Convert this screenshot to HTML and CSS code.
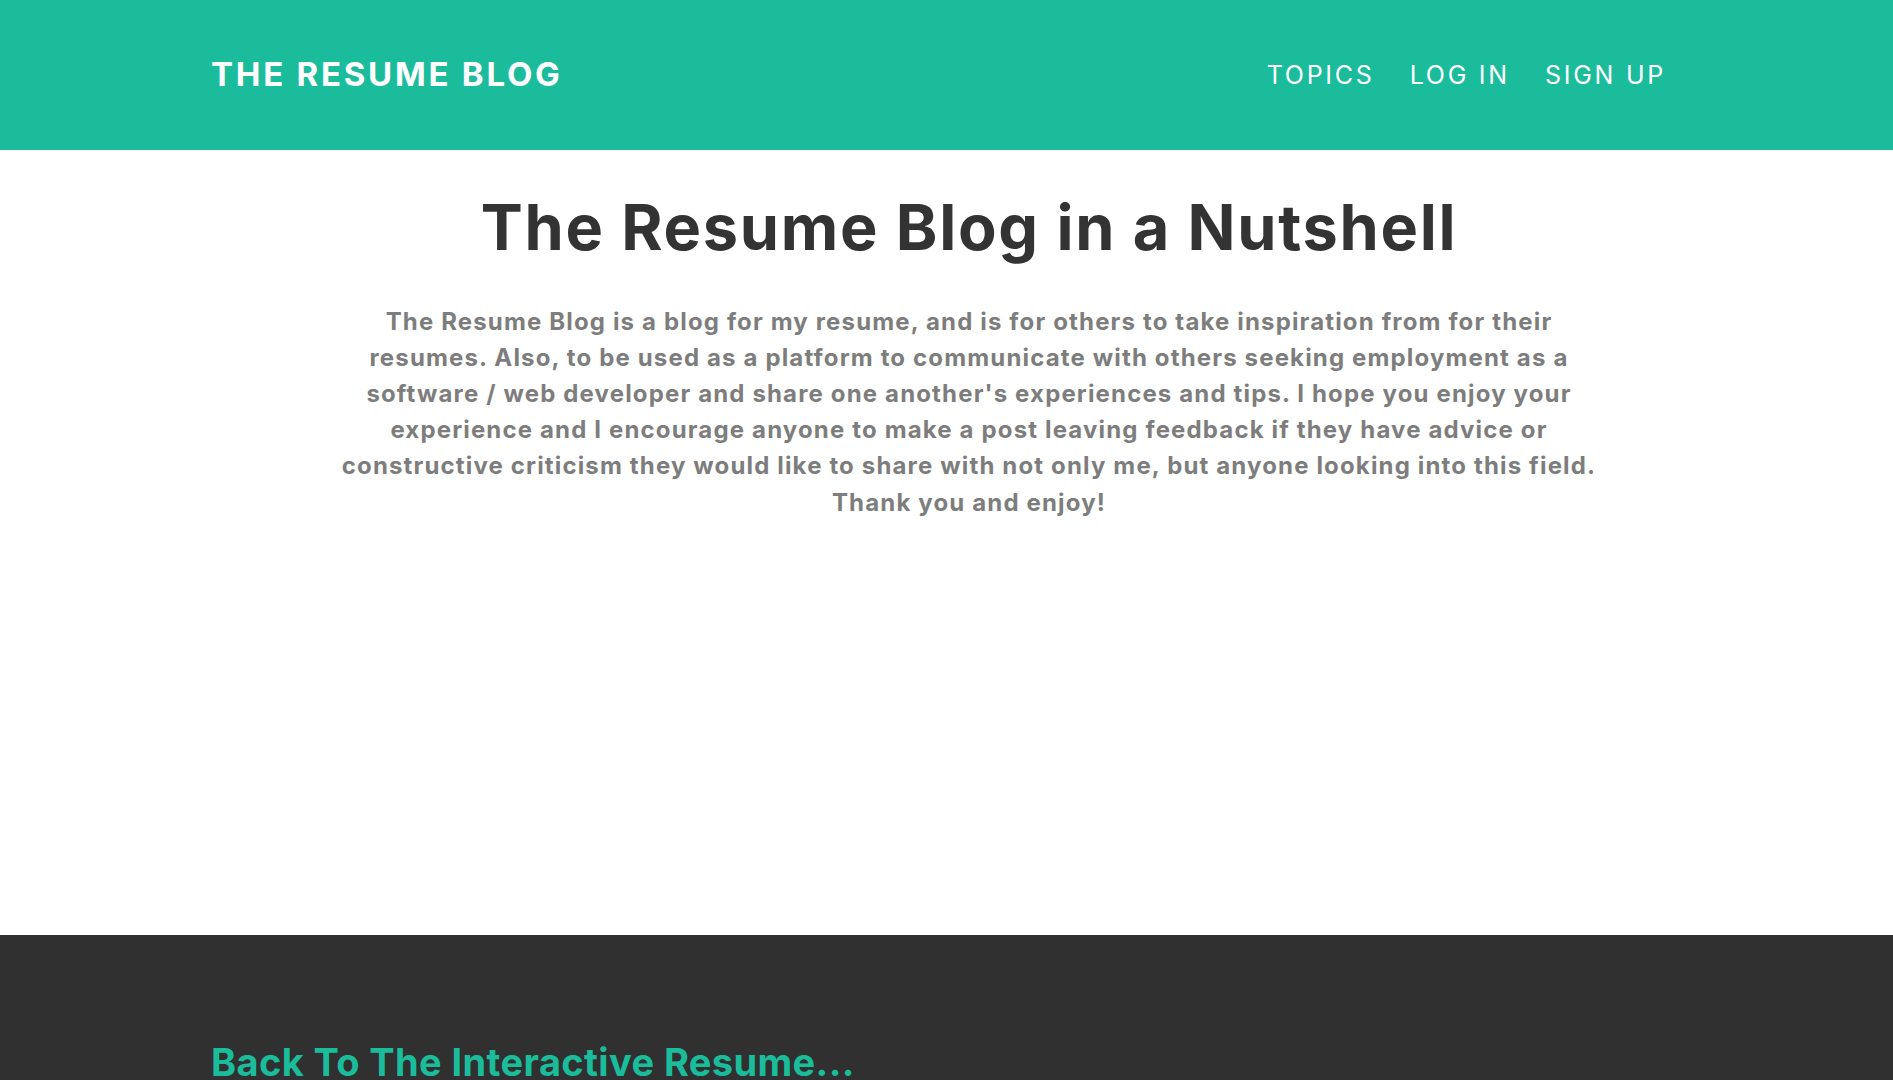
FILE: index.html
```html
<!DOCTYPE html>
<html lang="en">
<head>
<meta charset="utf-8">
<title>The Resume Blog</title>
<link rel="stylesheet" href="styles.css">
</head>
<body>
<header class="topbar">
  <a class="brand" href="#">THE RESUME BLOG</a>
  <nav class="nav">
    <a href="#">TOPICS</a>
    <a href="#">LOG IN</a>
    <a href="#">SIGN UP</a>
  </nav>
</header>
<main class="intro">
  <h1 class="intro-title">The Resume Blog in a Nutshell</h1>
  <p class="intro-text">The Resume Blog is a blog for my resume, and is for others to take inspiration from for their<br>
  resumes. Also, to be used as a platform to communicate with others seeking employment as a<br>
  software / web developer and share one another's experiences and tips. I hope you enjoy your<br>
  experience and I encourage anyone to make a post leaving feedback if they have advice or<br>
  constructive criticism they would like to share with not only me, but anyone looking into this field.<br>
  Thank you and enjoy!</p>
</main>
<footer class="footer">
  <a class="back-link" href="#">Back To The Interactive Resume...</a>
</footer>
</body>
</html>
```

FILE: styles.css
```css
* { box-sizing: border-box; }
html, body { margin: 0; padding: 0; }
body {
  font-family: "Inter", "Open Sans", sans-serif;
  background: #fff;
  color: #333;
  overflow: hidden;
}
a { text-decoration: none; }

.topbar {
  height: 150px;
  background: #1abc9c;
  display: flex;
  align-items: center;
  justify-content: space-between;
  padding: 0 227px 0 211px;
}
.brand {
  color: #fff;
  font-weight: 700;
  font-size: 33px;
  letter-spacing: 2.75px;
  line-height: 1;
  margin-top: -2px;
}
.nav {
  display: flex;
  gap: 35px;
}
.nav a {
  color: #fff;
  font-weight: 400;
  font-size: 25px;
  letter-spacing: 2.75px;
  line-height: 1;
}

.intro {
  height: 785px;
  padding: 40px 0 0 45px;
  text-align: center;
}
.intro-title {
  margin: 0;
  font-size: 63px;
  font-weight: 700;
  color: #333;
  line-height: 1.2;
  letter-spacing: 1.7px;
}
.intro-text {
  margin: 38px 0 0;
  font-size: 24px;
  font-weight: 700;
  color: #7d7d7d;
  line-height: 36.2px;
  letter-spacing: 1.15px;
}

.footer {
  height: 145px;
  background: #303030;
  padding: 105px 0 0 211px;
}
.back-link {
  color: #1abc9c;
  font-size: 38px;
  font-weight: 700;
  line-height: 1.2;
  letter-spacing: 0.38px;
}
```
